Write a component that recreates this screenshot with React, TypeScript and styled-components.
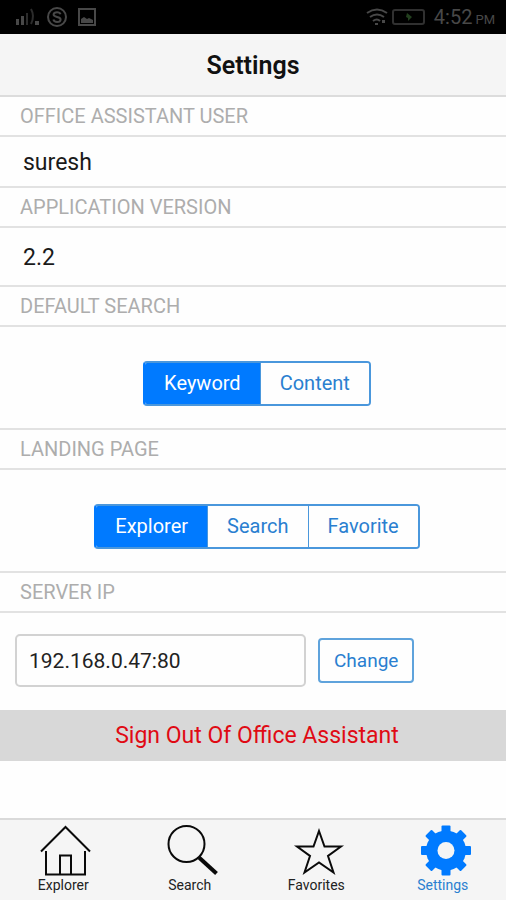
import React, { useState } from "react";
import styled, { createGlobalStyle } from "styled-components";

const blue = "#007aff";
const outlineBlue = "#4a97dc";
const textBlue = "#2a7fd0";
const line = "#e2e2e2";

const GlobalStyle = createGlobalStyle`
  *, *::before, *::after { box-sizing: border-box; }
  body { margin: 0; background: #fefefe; }
  body, button, input { font-family: Roboto, "Liberation Sans", sans-serif; }
`;

const Page = styled.div`
  display: flex;
  flex-direction: column;
  min-height: 100vh;
  color: #1a1a1a;
`;

const StatusBar = styled.div`
  display: flex;
  align-items: center;
  justify-content: space-between;
  height: 34px;
  padding: 0 11px 0 15px;
  background: #000;
  color: #484848;
`;

const StatusGroup = styled.div<{ $gap: number }>`
  display: flex;
  align-items: center;
  gap: ${(p) => p.$gap}px;
`;

const Clock = styled.span`
  margin-left: 5px;
  padding-top: 3px;
  font-size: 20px;
  line-height: 30px;
  small { margin-left: 3px; font-size: 13px; }
`;

const Header = styled.header`
  padding: 17px 0 14px;
  background: #f5f5f5;
  border-bottom: 2px solid #dcdcdc;
  text-align: center;
`;

const Title = styled.h1`
  margin: 0;
  font-size: 25px;
  line-height: 30px;
  font-weight: 600;
  color: #111;
`;

const Main = styled.main`
  flex: 1;
`;

const SectionTitle = styled.h2`
  margin: 0;
  padding: 7px 20px;
  border-top: 2px solid ${line};
  border-bottom: 2px solid ${line};
  font-size: 20px;
  line-height: 24px;
  font-weight: 400;
  color: #adadad;
  text-transform: uppercase;
  section:first-child > & { border-top: 0; }
`;

const Value = styled.p<{ $height: number }>`
  display: flex;
  align-items: center;
  min-height: ${(p) => p.$height}px;
  margin: 0;
  padding: 2px 23px 0;
  font-size: 23px;
  line-height: 26px;
`;

const SegmentRow = styled.div`
  display: flex;
  justify-content: center;
  padding: 34px 0 22px 8px;
`;

const Segments = styled.div`
  display: flex;
  border: 2px solid ${outlineBlue};
  border-radius: 4px;
  overflow: hidden;
  &:has(button:first-child[aria-pressed="true"]) { border-left-color: ${blue}; }
`;

const Segment = styled.button<{ $active: boolean }>`
  padding: 9px 19px;
  border: 0;
  background: ${(p) => (p.$active ? blue : "#fefefe")};
  color: ${(p) => (p.$active ? "#fff" : textBlue)};
  font-size: 20px;
  line-height: 23px;
  cursor: pointer;
  & + & { border-left: 1px solid ${outlineBlue}; }
`;

const ServerRow = styled.form`
  display: grid;
  grid-template-columns: 61% auto;
  justify-content: start;
  align-items: center;
  gap: 12px;
  padding: 21px 14px 23px 15px;
`;

const AddressInput = styled.input`
  width: 100%;
  height: 53px;
  padding: 0 12px;
  border: 2px solid #d2d2d2;
  border-radius: 5px;
  background: #fefefe;
  color: #222;
  font-size: 21px;
`;

const ChangeButton = styled.button`
  padding: 10px 14px;
  border: 2px solid #5fa3dc;
  border-radius: 4px;
  background: #fefefe;
  color: ${textBlue};
  font-size: 19px;
  line-height: 21px;
  cursor: pointer;
`;

const SignOut = styled.button`
  display: block;
  width: 100%;
  padding: 13px 0 12px 8px;
  border: 0;
  background: #d8d8d8;
  color: #e00a14;
  font-size: 23px;
  line-height: 26px;
  cursor: pointer;
`;

const TabBar = styled.nav`
  display: grid;
  grid-template-columns: repeat(4, 1fr);
  border-top: 2px solid #dadada;
  background: #f5f5f5;
`;

const Tab = styled.a<{ $active?: boolean }>`
  display: flex;
  flex-direction: column;
  align-items: center;
  padding: 4px 0 7px;
  color: ${(p) => (p.$active ? textBlue : "#222")};
  font-size: 14px;
  line-height: 16px;
  text-decoration: none;
`;

const SignalIcon = () => (
  <svg width="25" height="20" viewBox="0 0 25 20" fill="#484848" aria-hidden="true">
    <rect x="1" y="12" width="3" height="6" />
    <rect x="6" y="9" width="3" height="9" />
    <rect x="11" y="6" width="2" height="12" fill="#2c2c2c" />
    <path d="M16 2q4 7 0 15" fill="none" stroke="#2c2c2c" strokeWidth="2" />
    <rect x="20" y="14" width="4" height="4" />
  </svg>
);

const SkypeIcon = () => (
  <svg width="20" height="20" viewBox="0 0 20 20" fill="none" stroke="#484848" strokeWidth="2" aria-hidden="true">
    <circle cx="10" cy="10" r="9" />
    <path d="M13.5 7.200C13 5.700 11.700 5.200 10 5.200c-2 0-3.400.9-3.400 2.300 0 3.300 7 1.500 7 4.900 0 1.600-1.500 2.500-3.500 2.500-1.900 0-3.300-.8-3.700-2.400" />
  </svg>
);

const PictureIcon = () => (
  <svg width="22" height="18" viewBox="-4 0 22 18" aria-hidden="true">
    <rect x="1" y="1" width="16" height="16" fill="none" stroke="#484848" strokeWidth="2" />
    <path d="M3 15v-4l3-2 3 2 2-1 4 2v3z" fill="#484848" />
  </svg>
);

const WifiIcon = () => (
  <svg width="22" height="18" viewBox="0 0 22 18" fill="none" stroke="#484848" strokeWidth="2" aria-hidden="true">
    <path d="M1 5q10-7 20 0M4 9q7-5 14 0M7 13q4-3 7 0" />
    <rect x="9" y="15" width="3" height="2" fill="#484848" stroke="none" />
    <rect x="16" y="12" width="3" height="3" fill="#484848" stroke="none" />
  </svg>
);

const BatteryIcon = () => (
  <svg width="33" height="16" viewBox="0 0 33 16" aria-hidden="true">
    <rect x="1" y="1" width="31" height="14" rx="2" fill="none" stroke="#303030" strokeWidth="2" />
    <path d="M15 4l5 4-4 4v-3l-2-1z" fill="#23401f" />
  </svg>
);

const HomeIcon = () => (
  <svg width="58" height="53" viewBox="-5 0 58 53" fill="none" stroke="#0a0a0a" strokeWidth="2" aria-hidden="true">
    <path d="M2 27.500L26.500 3 51 27.500" />
    <path d="M7 27V50.500h39V27M21 50.500V31.500h11v19" />
  </svg>
);

const SearchIcon = () => (
  <svg width="58" height="53" viewBox="-4 0 58 53" fill="none" stroke="#0a0a0a" aria-hidden="true">
    <circle cx="21.500" cy="20" r="18" strokeWidth="2" />
    <path d="M34 33.500L51.500 49.500" strokeWidth="4" />
  </svg>
);

const StarIcon = () => (
  <svg width="58" height="53" viewBox="-3 0 58 53" fill="none" stroke="#0a0a0a" strokeWidth="2" aria-hidden="true">
    <path d="M29 7l5.500 15.500H51L38 32l5.500 16.500L29 38.500l-14.500 10L20 32 7 22.500h16.500z" />
  </svg>
);

const GearIcon = () => (
  <svg width="58" height="53" viewBox="-3 0 58 53" aria-hidden="true">
    <g fill={blue}>
      {[0, 45, 90, 135].map((angle) => (
        <rect key={angle} x="24.500" y="1.500" width="9" height="50" rx="1" transform={`rotate(${angle} 29 26.500)`} />
      ))}
      <circle cx="29" cy="26.500" r="20" />
    </g>
    <circle cx="29" cy="26.500" r="8.500" fill="#f5f5f5" />
  </svg>
);

const tabs = [
  { name: "Explorer", Icon: HomeIcon },
  { name: "Search", Icon: SearchIcon },
  { name: "Favorites", Icon: StarIcon },
  { name: "Settings", Icon: GearIcon },
];

function SegmentedControl({ label, options }: { label: string; options: string[] }) {
  const [selected, setSelected] = useState(options[0]);
  return (
    <SegmentRow>
      <Segments role="group" aria-label={label}>
        {options.map((option) => (
          <Segment
            key={option}
            type="button"
            $active={option === selected}
            aria-pressed={option === selected}
            onClick={() => setSelected(option)}
          >
            {option}
          </Segment>
        ))}
      </Segments>
    </SegmentRow>
  );
}

export default function App() {
  return (
    <Page>
      <GlobalStyle />
      <StatusBar>
        <StatusGroup $gap={7}>
          <SignalIcon />
          <SkypeIcon />
          <PictureIcon />
        </StatusGroup>
        <StatusGroup $gap={4}>
          <WifiIcon />
          <BatteryIcon />
          <Clock>
            4:52<small>PM</small>
          </Clock>
        </StatusGroup>
      </StatusBar>
      <Header>
        <Title>Settings</Title>
      </Header>
      <Main>
        <section>
          <SectionTitle>Office Assistant User</SectionTitle>
          <Value $height={49}>suresh</Value>
        </section>
        <section>
          <SectionTitle>Application Version</SectionTitle>
          <Value $height={57}>2.2</Value>
        </section>
        <section>
          <SectionTitle>Default Search</SectionTitle>
          <SegmentedControl label="Default Search" options={["Keyword", "Content"]} />
        </section>
        <section>
          <SectionTitle>Landing Page</SectionTitle>
          <SegmentedControl label="Landing Page" options={["Explorer", "Search", "Favorite"]} />
        </section>
        <section>
          <SectionTitle>
            <label htmlFor="server-ip">Server IP</label>
          </SectionTitle>
          <ServerRow onSubmit={(e: React.FormEvent) => e.preventDefault()}>
            <AddressInput id="server-ip" defaultValue="192.168.0.47:80" />
            <ChangeButton type="submit">Change</ChangeButton>
          </ServerRow>
        </section>
        <SignOut type="button">Sign Out Of Office Assistant</SignOut>
      </Main>
      <TabBar>
        {tabs.map(({ name, Icon }) => (
          <Tab key={name} href={`#${name.toLowerCase()}`} $active={name === "Settings"}>
            <Icon />
            {name}
          </Tab>
        ))}
      </TabBar>
    </Page>
  );
}
